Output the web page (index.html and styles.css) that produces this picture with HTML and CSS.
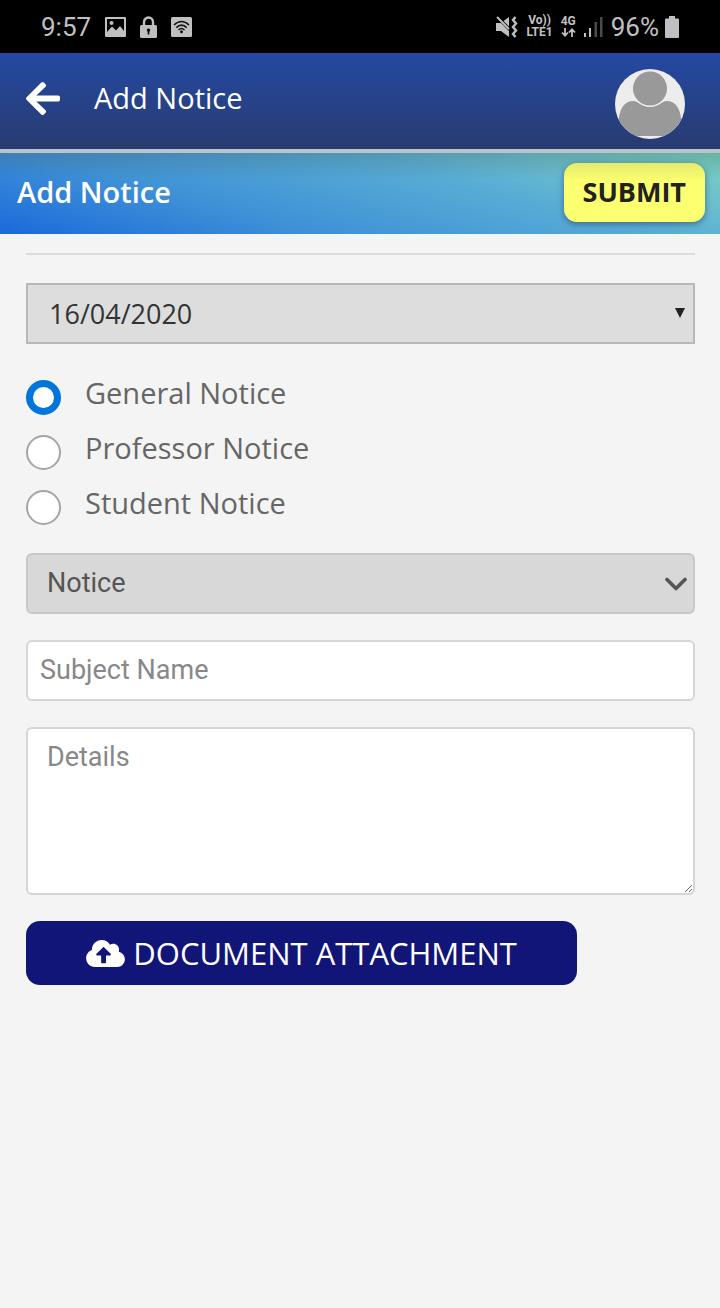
FILE: index.html
```html
<!DOCTYPE html>
<html lang="en">
<head>
<meta charset="utf-8">
<meta name="viewport" content="width=device-width, initial-scale=1">
<title>Add Notice</title>
<link rel="stylesheet" href="styles.css">
</head>
<body>
<div class="status">
  <div class="status-group status-left">
    <span class="status-text">9:57</span>
    <svg class="status-icon" width="21" height="20" viewBox="0 0 21 20"><path fill="currentColor" fill-rule="evenodd" d="M1 0H20Q21 0 21 1V19Q21 20 20 20H1Q0 20 0 19V1Q0 0 1 0ZM2 2V15L7 9.500L11 13.500L15 9L19 14V2Z"/><circle cx="6.500" cy="6" r="2" fill="currentColor"/></svg>
    <svg class="status-icon" width="17" height="22" viewBox="0 0 17 22"><path fill="none" stroke="currentColor" stroke-width="2.400" d="M4 10V6a4.500 4.500 0 0 1 9 0V10"/><rect y="9" width="17" height="13" rx="1.500" fill="currentColor"/><path fill="#000" d="M8.500 12.500a1.700 1.700 0 0 1 .8 3.200V18.500H7.700V15.700a1.700 1.700 0 0 1 .8-3.200Z"/></svg>
    <svg class="status-icon" width="21" height="20" viewBox="0 0 21 20"><rect width="21" height="20" rx="1.500" fill="currentColor"/><g fill="none" stroke="#111" stroke-width="1.500"><path d="M3 8Q10.500 1 18 8"/><path d="M5.300 10.600Q10.500 5.600 15.700 10.600"/><path d="M7.500 13Q10.500 10 13.500 13"/></g><circle cx="10.500" cy="14.800" r="1.500" fill="#111"/></svg>
  </div>
  <div class="status-group status-right">
    <svg class="status-icon" width="22" height="22" viewBox="0 0 22 22"><path fill="currentColor" d="M0 7H5L13 15V21L5 15H0ZM7.500 5L13 1V10.500Z"/><path d="M1 1L13 13" stroke="currentColor" stroke-width="2"/><path fill="none" stroke="currentColor" stroke-width="2.400" d="M19.500 1L17 4L20 7.500L17 11L20 14.500L17 18L19.500 21"/></svg>
    <div class="network"><span>Vo))</span><span>LTE1</span></div>
    <div class="network"><span>4G</span>
      <svg width="15" height="9" viewBox="0 0 15 9"><path fill="none" stroke="currentColor" stroke-width="1.800" d="M4 0V7.500M1 4.500L4 7.700L7 4.500M11 9V1.500M8 4.500L11 1.300L14 4.500"/></svg>
    </div>
    <svg class="status-icon" width="19" height="20" viewBox="0 0 19 20"><path fill="currentColor" d="M0 16H2V20H0ZM5 11H7V20H5Z"/><path fill="#4b4b4b" d="M10.500 5H13V20H10.500ZM16 0H18.500V20H16Z"/></svg>
    <div class="status-group battery">
      <span class="status-text">96%</span>
      <svg class="status-icon" width="14" height="22" viewBox="0 0 14 22"><path fill="currentColor" d="M4 0H10V2.500H13Q14 2.500 14 3.500V21Q14 22 13 22H1Q0 22 0 21V3.500Q0 2.500 1 2.500H4Z"/></svg>
    </div>
  </div>
</div>
<header class="topbar">
  <a class="back" href="#" aria-label="Back"><svg width="34" height="39" viewBox="0 0 448 512"><path fill="currentColor" d="M257.500 445.100l-22.200 22.200c-9.400 9.400-24.600 9.400-33.900 0L7 273c-9.400-9.400-9.400-24.600 0-33.900L201.400 44.700c9.400-9.400 24.600-9.400 33.900 0l22.200 22.200c9.500 9.500 9.300 25-.4 34.300L136.600 216H424c13.300 0 24 10.700 24 24v32c0 13.300-10.700 24-24 24H136.600l120.500 114.800c9.800 9.300 10 24.800.4 34.300z"/></svg></a>
  <span class="topbar-title">Add Notice</span>
  <a class="avatar" href="#" aria-label="Profile"><svg width="70" height="70" viewBox="0 0 70 70"><defs><clipPath id="disc"><circle cx="35" cy="35" r="35"/></clipPath></defs><g clip-path="url(#disc)"><rect width="70" height="70" fill="#ededed"/><path fill="#999" d="M4 67V49C5 39 10 32 18 32C24 32 27 38 35 38C43 38 46 32 52 32C60 32 65 39 66 49V67Z"/><circle cx="35" cy="19.500" r="18.500" fill="#ededed"/><circle cx="35" cy="19.500" r="17" fill="#999"/></g></svg></a>
</header>
<form class="page">
  <div class="titlebar">
    <h1 class="title">Add Notice</h1>
    <button class="submit" type="submit">SUBMIT</button>
  </div>
  <main class="content">
    <hr class="rule">
    <div class="picker">
      <select class="control date" aria-label="Date"><option>16/04/2020</option></select>
      <svg class="marker marker-date" width="10" height="10" viewBox="0 0 10 10"><path fill="#222" d="M0 0H10L5 10Z"/></svg>
    </div>
    <fieldset class="kinds">
      <label class="kind"><input class="radio" type="radio" name="kind" checked><span>General Notice</span></label>
      <label class="kind"><input class="radio" type="radio" name="kind"><span>Professor Notice</span></label>
      <label class="kind"><input class="radio" type="radio" name="kind"><span>Student Notice</span></label>
    </fieldset>
    <div class="picker">
      <select class="control type" aria-label="Notice type"><option>Notice</option></select>
      <svg class="marker marker-type" width="24" height="14" viewBox="0 0 24 14"><path fill="none" stroke="#555" stroke-width="3.600" stroke-linecap="round" stroke-linejoin="round" d="M3 2.500L12 11.500L21 2.500"/></svg>
    </div>
    <input class="control subject" type="text" placeholder="Subject Name" aria-label="Subject Name">
    <textarea class="control details" placeholder="Details" aria-label="Details"></textarea>
    <button class="attach" type="button"><svg width="39" height="31" viewBox="0 0 640 512"><path fill="currentColor" d="M537.600 226.600c4.100-10.700 6.400-22.400 6.400-34.600 0-53-43-96-96-96-19.700 0-38.100 6-53.300 16.200C367 64.200 315.300 32 256 32c-88.400 0-160 71.600-160 160 0 2.700.1 5.400.2 8.100C40.200 219.800 0 273.200 0 336c0 79.500 64.500 144 144 144h368c70.700 0 128-57.300 128-128 0-61.900-44-113.600-102.400-125.400zM393.400 288H328v112c0 8.800-7.200 16-16 16h-48c-8.800 0-16-7.200-16-16V288h-65.400c-14.300 0-21.400-17.200-11.300-27.300l105.400-105.400c6.200-6.200 16.400-6.200 22.600 0l105.400 105.400c10.100 10.100 2.900 27.300-11.300 27.300z"/></svg><span>DOCUMENT ATTACHMENT</span></button>
  </main>
</form>
</body>
</html>
```
FILE: styles.css
```css
* { box-sizing: border-box; }

body {
  margin: 0;
  min-height: 100vh;
  background: #f4f4f4;
  font-family: "Open Sans", sans-serif;
}

.status {
  display: flex;
  justify-content: space-between;
  height: 53px;
  padding: 0 41px;
  background: #000;
  color: #c0c0c0;
  font-family: Roboto, sans-serif;
}
.status-group { display: flex; align-items: center; }
.status-left { gap: 14px; }
.status-right { gap: 8px; }
.battery { gap: 6px; }
.status-text { font-size: 26px; line-height: 32px; }
.network {
  display: flex;
  flex-direction: column;
  align-items: center;
  gap: 1px;
  font-size: 12px;
  font-weight: 700;
  line-height: 11px;
}

.topbar {
  display: flex;
  align-items: center;
  height: 96px;
  padding: 0 35px 6px 26px;
  background: linear-gradient(#2448a2, #293c70);
  color: #fff;
}
.back { display: flex; margin-right: 34px; color: #fff; }
.topbar-title { flex: 1; font-size: 29px; line-height: 40px; }
.avatar { display: flex; padding-top: 12px; }

.titlebar {
  display: flex;
  align-items: center;
  justify-content: space-between;
  height: 85px;
  padding: 0 15px 3px 17px;
  border-top: 4px solid #bcc4cb;
  background:
    linear-gradient(rgba(60, 80, 80, 0.25), rgba(60, 80, 80, 0) 26px),
    linear-gradient(15deg, #1b69dc, #3f92d6 32%, #58add5 65%, #69bccf 78%, #79d4c0) padding-box;
}
.title { margin: 0; color: #fff; font-size: 29px; font-weight: 600; line-height: 40px; }
.submit {
  height: 59px;
  padding: 0 19px;
  border: 0;
  border-radius: 13px;
  background: linear-gradient(#e5ea6c, #fbff70 18px);
  box-shadow: 0 2px 6px rgba(40, 60, 90, 0.6);
  color: #222;
  font: 700 27px/36px "Open Sans", sans-serif;
}

.content { padding: 19px 25px 28px 26px; }
.rule { height: 2px; margin: 0 0 28px; border: 0; background: #d9dcdb; }

.picker { position: relative; }
.marker { position: absolute; pointer-events: none; }
.marker-date { top: 25px; right: 10px; }
.marker-type { top: 24px; right: 7px; }

.control {
  display: block;
  width: 100%;
  height: 61px;
  margin: 0 0 26px;
  border: 2px solid #d5d5d5;
  border-radius: 6px;
  background: #fff;
  color: #555;
  font: 27px/32px Roboto, sans-serif;
  appearance: none;
}
.control::placeholder { color: #888; opacity: 1; }
.date {
  padding: 0 40px 0 21px;
  border-color: #b8b8b8;
  border-radius: 0;
  background: #ddd;
  color: #333;
  font: 27px/40px "Open Sans", sans-serif;
}
.type { padding: 0 40px 2px 19px; border-color: #c8c8c8; background: #d8d8d8; }
.subject { padding: 0 12px 2px; }
.details { height: 168px; padding: 12px 19px; resize: vertical; }

.kinds { display: grid; gap: 15px; margin: 0 0 23px; padding: 10px 0 0; border: 0; }
.kind { display: flex; gap: 24px; height: 40px; color: #666; font-size: 29px; line-height: 26px; }
.radio {
  width: 35px;
  height: 35px;
  margin: 0;
  border: 2px solid #a5a5a5;
  border-radius: 50%;
  background: #fff;
  appearance: none;
}
.radio:checked { border: 7px solid #0076dc; }

.attach {
  display: flex;
  align-items: center;
  justify-content: center;
  gap: 8px;
  width: 82.4%;
  height: 64px;
  padding: 0;
  border: 0;
  border-radius: 14px;
  background: #111577;
  color: #fff;
  font: 31px/42px "Open Sans", sans-serif;
}
```
